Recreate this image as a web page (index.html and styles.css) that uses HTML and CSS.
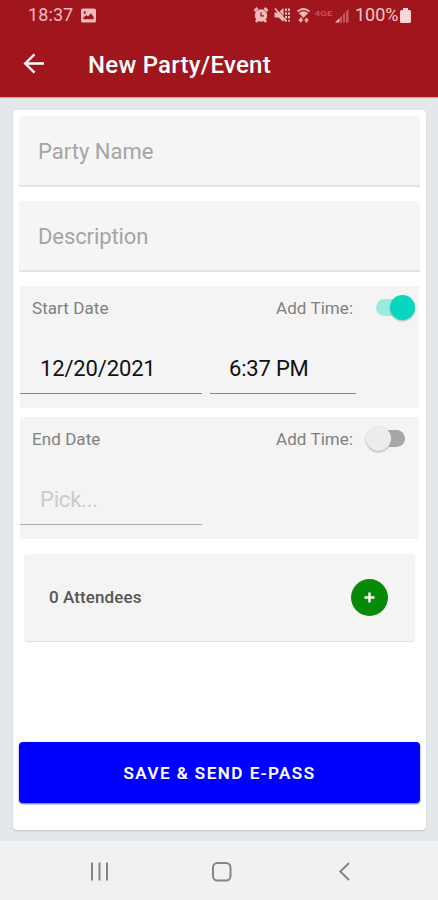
FILE: index.html
```html
<!DOCTYPE html>
<html lang="en">
<head>
<meta charset="utf-8">
<title>New Party/Event</title>
<link rel="stylesheet" href="styles.css">
</head>
<body>
<header class="header">
  <div class="status">
    <span class="clock">18:37</span>
    <svg class="picture" width="15" height="15" viewBox="0 0 16 15"><path fill="#efbcbc" fill-rule="evenodd" d="M2 0h12a2 2 0 0 1 2 2v11a2 2 0 0 1-2 2H2a2 2 0 0 1-2-2V2a2 2 0 0 1 2-2zM2.500 11.500h11V9l-3-4-3 3.500L5.500 7l-3 3zM3 3v2.500h2V3z"/></svg>
    <svg class="signals" width="97" height="18" viewBox="0 0 97 18">
      <g fill="#efbcbc" stroke="#efbcbc">
        <circle cx="8" cy="9.500" r="5.200" stroke-width="2"/>
        <path fill="none" stroke-width="2.600" d="M1.500 5l3-3M11.500 2l3 3M3 16l1.500-2M13 16l-1.500-2"/>
        <path fill="none" stroke="#a1151c" stroke-width="1.300" d="M8 6.200v3.600h3"/>
        <path stroke="none" d="M21.500 6.500h4l5-4.500v14l-5-4.500h-4z"/>
        <path fill="none" stroke-width="1.800" d="M22 2.500l11 12.500"/>
        <path fill="none" stroke-width="2" stroke-dasharray="2.500 1.300" d="M33 2.500v13M36 2.500v13"/>
        <path fill="none" stroke="#a1151c" stroke-width=".7" d="M23.200 2l8 9"/>
        <path fill="none" stroke-width="2" d="M44.500 5.500q6-5 12 0M46.500 8q4-3.500 8 0"/>
        <path stroke="none" d="M47 8q3.500-3 7 0l-3.500 4zM45 13.500h2v-2h2v2h1.500l-2.700 3.300zM51 14.500l2.500-3 2.500 3h-1.500v2h-2v-2z"/>
      </g>
      <text class="carrier" x="61.500" y="10" textLength="18" lengthAdjust="spacingAndGlyphs">4GE</text>
      <path fill="#c65b60" d="M87 16.500v-5l2-2v7zM90 16.500V8.500l2-2v10zM93 16.500V5.500l2.500-2.500v13.500z"/>
      <path fill="#efbcbc" d="M86.500 12v4.500H82z"/>
    </svg>
    <span class="percent">100%</span>
    <svg class="battery" width="11" height="15" viewBox="0 0 11 15"><path fill="#fbd6d4" d="M3 0h5v2h1.500q1.500 0 1.500 1.500v10Q11 15 9.500 15h-8Q0 15 0 13.500v-10Q0 2 1.500 2H3z"/></svg>
  </div>
  <div class="toolbar">
    <svg class="back" width="22" height="22" viewBox="0 0 22 22"><path fill="none" stroke="#fff" stroke-width="2.400" d="M21 10.500H2.500M11.500 1.300L2.200 10.500l9.300 9.200"/></svg>
    <h1 class="title">New Party/Event</h1>
  </div>
</header>
<main class="page">
  <section class="card">
    <div class="field"><span class="party">Party Name</span></div>
    <div class="field"><span class="description">Description</span></div>
    <div class="panel">
      <div class="row">
        <span class="label start">Start Date</span>
        <span class="label add">Add Time:</span>
        <span class="switch on"><i class="thumb"></i></span>
      </div>
      <div class="inputs">
        <div class="input date"><span class="date-text">12/20/2021</span></div>
        <div class="input time"><span class="time-text">6:37 PM</span></div>
      </div>
    </div>
    <div class="panel end-panel">
      <div class="row">
        <span class="label end">End Date</span>
        <span class="label add">Add Time:</span>
        <span class="switch"><i class="thumb"></i></span>
      </div>
      <div class="inputs">
        <div class="input date empty"><span class="pick">Pick...</span></div>
      </div>
    </div>
    <div class="attendees">
      <span class="count">0 Attendees</span>
      <span class="plus"><svg width="11" height="11" viewBox="0 0 11 11"><path stroke="#fff" stroke-width="2.400" d="M5.500 .5v10M.5 5.500h10"/></svg></span>
    </div>
    <div class="save"><span class="save-text">SAVE &amp; SEND E-PASS</span></div>
  </section>
</main>
<nav class="nav">
  <svg width="438" height="59" viewBox="0 0 438 59">
    <g fill="none" stroke="#858585" stroke-width="2">
      <path d="M92 21.500v18M99.500 21.500v18M107 21.500v18"/>
      <rect x="213" y="22" width="17.500" height="17.500" rx="4.500"/>
      <path d="M349 22l-8.700 8.500 8.700 8.500"/>
    </g>
  </svg>
</nav>
</body>
</html>
```
FILE: styles.css
```css
* { box-sizing: border-box; }
body { margin: 0; width: 438px; height: 900px; display: flex; flex-direction: column; font-family: Roboto, sans-serif; background: #e5e8eb; overflow: hidden; }
span, h1 { white-space: nowrap; }
.header { height: 97px; flex: none; background: #a1151c; box-shadow: 0 1px 1px #c9a3a6; }
.status { display: flex; align-items: center; height: 30px; padding-left: 28px; color: #efbcbc; font-size: 18px; line-height: 30px; }
.clock { width: 53px; letter-spacing: .1px; }
.signals { margin: 0 5px 0 157px; }
.carrier { font-size: 8px; font-weight: 500; fill: #c65b60; }
.percent { width: 45px; color: #f5c8c7; }
.toolbar { display: flex; align-items: center; height: 67px; padding-left: 23px; }
.back { margin-top: 1px; }
.title { margin: 3px 0 0 43px; color: #fff; font-size: 24px; line-height: 30px; font-weight: 500; letter-spacing: .25px; }
.page { height: 744px; flex: none; padding: 13px 12px 11px 13px; }
.card { height: 720px; padding: 6px; background: #fff; border-radius: 4px; box-shadow: 0 1px 2px #bfc4c8; display: flex; flex-direction: column; }
.field { height: 71px; flex: none; padding: 21px 19px; margin-bottom: 14px; background: #f5f5f5; border-bottom: 2px solid #e4e4e4; border-radius: 4px 4px 0 0; font-size: 22px; line-height: 30px; color: #a5a5a5; }
.description { letter-spacing: -.1px; }
.panel { height: 122px; flex: none; margin: 0 1px; background: #f4f4f4; }
.end-panel { margin-top: 9px; }
.row { display: flex; align-items: center; height: 44px; padding-left: 12px; }
.label { color: #808080; font-size: 17px; line-height: 24px; letter-spacing: .07px; }
.start, .end { width: 244px; }
.add { width: 89px; }
.switch { position: relative; top: -1px; width: 35px; height: 17px; margin-left: 5px; border-radius: 9px; background: #a7a7a7; }
.thumb { position: absolute; left: -4px; top: -4px; width: 25px; height: 25px; border-radius: 50%; background: #ececec; box-shadow: 0 1px 2px #aaa; }
.on { width: 37px; margin-left: 11px; background: #99ecdf; }
.on .thumb { left: 14px; background: #06d8c0; }
.inputs { display: flex; gap: 8px; }
.input { height: 64px; padding-top: 24px; font-size: 22px; line-height: 30px; color: #111; border-bottom: 1px solid #888; }
.date { width: 182px; padding-left: 20px; }
.time { width: 146px; padding-left: 19px; }
.date-text { letter-spacing: -.15px; }
.time-text { letter-spacing: -.2px; }
.pick { letter-spacing: -.2px; }
.empty { color: #cbcbcb; border-color: #aaa; }
.attendees { height: 87px; flex: none; display: flex; align-items: center; justify-content: space-between; margin: 15px 5px 0; padding: 0 27px 1px 25px; background: #f4f4f5; border-radius: 4px; box-shadow: 0 1px 1px #dedede; }
.count { color: #555; font-size: 17px; font-weight: 500; letter-spacing: .1px; }
.plus { width: 37px; height: 37px; display: grid; place-items: center; border-radius: 50%; background: #078a07; }
.save { height: 61px; flex: none; margin-top: auto; margin-bottom: 21px; display: grid; place-items: center; border-radius: 4px; background: #00f; box-shadow: 0 1px 2px #667; color: #fff; font-size: 17px; font-weight: 500; letter-spacing: 1.5px; }
.save-text { -webkit-text-stroke: .2px #fff; }
.nav { height: 59px; flex: none; background: #f1f1f1; }
.nav svg { display: block; }
```
